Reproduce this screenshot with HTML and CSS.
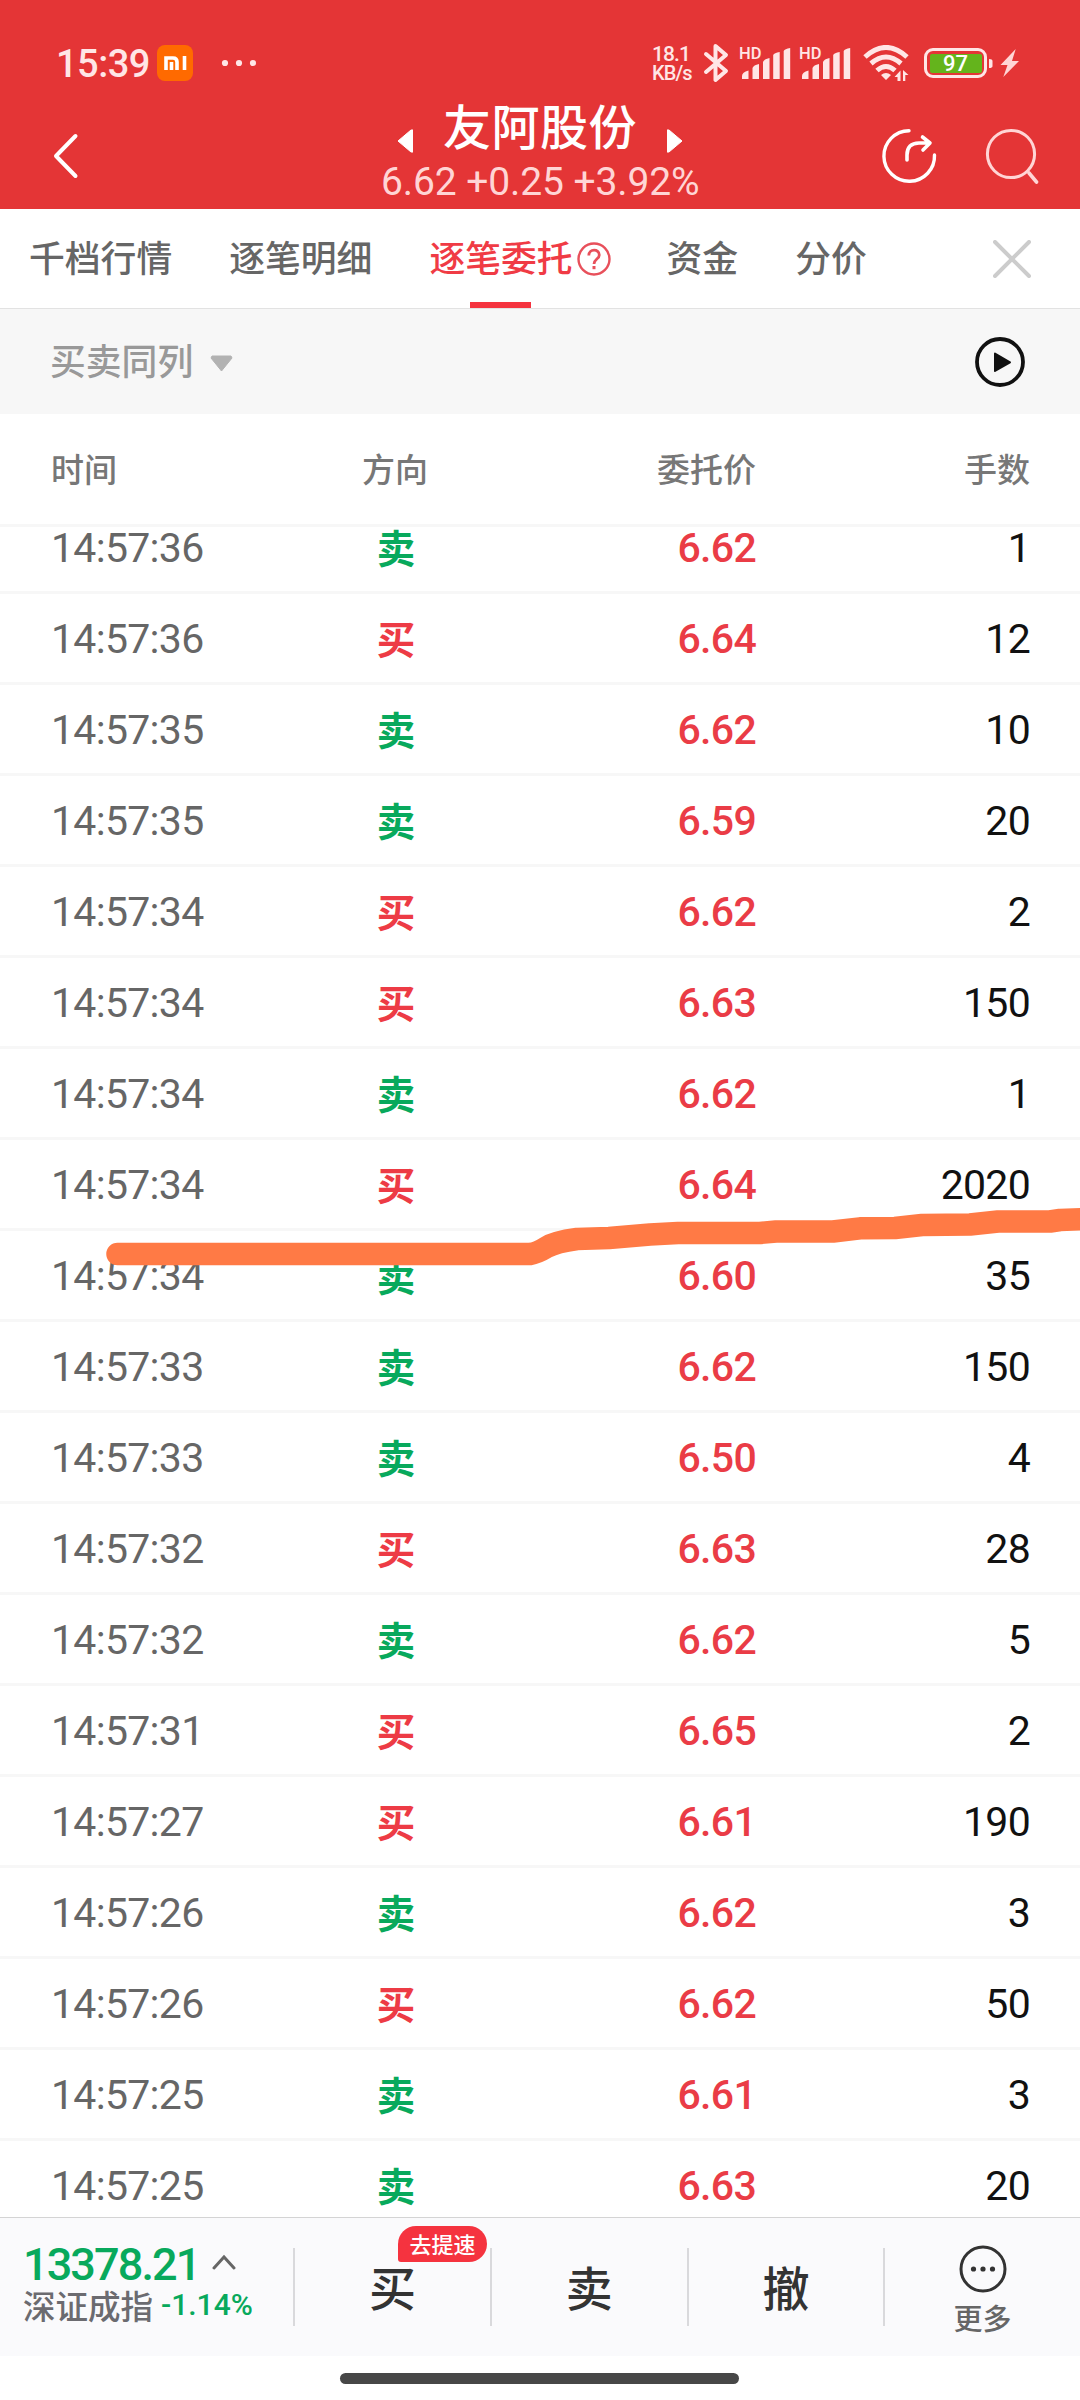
FILE: index.html
```html
<!DOCTYPE html>
<html lang="zh-CN">
<head>
    <meta charset="UTF-8">
    <meta name="viewport" content="width=device-width, initial-scale=1.0">
    <title>友阿股份</title>
    <link rel="stylesheet" href="styles.css">
</head>
<body>

    <!-- 顶部 -->
    <header class="header">
        <div class="status">
            <span class="clock">15:39</span>
            <svg class="mi" width="36" height="36" viewBox="0 0 36 36">
                <rect width="36" height="36" rx="8" fill="#ff6a00"/>
                <path d="M9 25V13H16q4 0 4 4v8M14.500 17v8M27.500 11v14" fill="none" stroke="#fff" stroke-width="3.600"/>
            </svg>
            <svg class="dots" width="36" height="8" viewBox="0 0 36 8" fill="#ffe6e6">
                <circle cx="4" cy="4" r="3.100"/><circle cx="18" cy="4" r="3.100"/><circle cx="32" cy="4" r="3.100"/>
            </svg>
            <div class="speed"><span>18.1</span><span>KB/s</span></div>
            <svg class="bluetooth" width="26" height="40" viewBox="0 0 26 40">
                <path d="M3 11l20 17-10.500 9V3L23 12 3 29" fill="none" stroke="#ffe6e6" stroke-width="4" stroke-linecap="round" stroke-linejoin="round"/>
            </svg>
            <div class="signal">
                <span>HD</span>
                <svg width="50" height="32" viewBox="0 0 50 32" fill="#ffe6e6">
                    <path d="M0 32v-3q0-4 6.500-5.500V32zM10.500 32V21q1-3 6.500-4V32zM21 32V15q1-3 6.500-4V32zM31.200 32V8q1-2 6.500-3V32zM41.700 32V4q1-2 6.500-3V32z"/>
                </svg>
            </div>
            <div class="signal">
                <span>HD</span>
                <svg width="50" height="32" viewBox="0 0 50 32" fill="#ffe6e6">
                    <path d="M0 32v-3q0-4 6.500-5.500V32zM10.500 32V21q1-3 6.500-4V32zM21 32V15q1-3 6.500-4V32zM31.200 32V8q1-2 6.500-3V32zM41.700 32V4q1-2 6.500-3V32z"/>
                </svg>
            </div>
            <svg class="wifi" width="46" height="36" viewBox="0 0 46 36">
                <path d="M2 12q21-19 42 0M8 18.500q15-13 30 0M14 25.500q9-8 18 0" fill="none" stroke="#ffe6e6" stroke-width="5"/>
                <path d="M18 30q5-4 10 0l-5 5zM37.500 36V25.500l-6 6.500h3v4zM40 25v11h2.300v-6h3.200z" fill="#ffe6e6"/>
            </svg>
            <div class="battery"><span>97</span></div>
            <svg class="bolt" width="34" height="30" viewBox="0 0 34 30">
                <path d="M2 11q3.500 0 3.500 2v5q0 2-3.500 2z" fill="#ffe6e6"/>
                <path d="M28.700 1L13.500 17h7L16.300 29 32 13h-7z" fill="#ffd5d5"/>
            </svg>
        </div>
        <div class="title-bar">
            <svg class="back" width="26" height="46" viewBox="0 0 26 46">
                <path d="M22.500 3L3 23l19.500 20" fill="none" stroke="#fff" stroke-width="4" stroke-linecap="round" stroke-linejoin="round"/>
            </svg>
            <div class="stock">
                <div class="name">
                    <svg width="16" height="24" viewBox="0 0 16 24"><path d="M1 12L14 1h2v22h-2z" fill="#fff" stroke="#fff" stroke-linejoin="round"/></svg>
                    <h1>友阿股份</h1>
                    <svg width="16" height="24" viewBox="0 0 16 24"><path d="M15 12L2 1H0v22h2z" fill="#fff" stroke="#fff" stroke-linejoin="round"/></svg>
                </div>
                <div class="quote">6.62 +0.25 +3.92%</div>
            </div>
            <svg class="share" width="56" height="56" viewBox="0 0 56 56">
                <path d="M28 2.700A25.300 25.300 0 1 0 53.500 27" fill="none" stroke="#fff" stroke-width="3.400" stroke-linecap="round"/>
                <path d="M26 32v-5q0-12 12-12H48M41.500 9l7.500 6-7 7" fill="none" stroke="#fff" stroke-width="3.600" stroke-linecap="round" stroke-linejoin="round"/>
            </svg>
            <svg class="search" width="54" height="56" viewBox="0 0 54 56">
                <circle cx="26" cy="26" r="23.600" fill="none" stroke="#ffd5d5" stroke-width="3"/>
                <path d="M44 45l7.500 9" stroke="#ffd5d5" stroke-width="3.600" stroke-linecap="round"/>
            </svg>
        </div>
    </header>

    <!-- 标签栏 -->
    <nav class="tabs">
        <span class="tab">千档行情</span>
        <span class="tab">逐笔明细</span>
        <span class="tab active">逐笔委托<svg width="34" height="34" viewBox="0 0 34 34" fill="none" stroke="#e8505b" stroke-width="2.400">
            <circle cx="17" cy="17" r="15.500"/>
            <path d="M11.800 13.500c0-7 10.500-7 10.500-.5 0 4-5.300 4.200-5.300 9" stroke-width="2.800"/>
            <path d="M17 24v3.200" stroke-width="3"/>
        </svg></span>
        <span class="tab">资金</span>
        <span class="tab">分价</span>
        <svg class="close" width="38" height="38" viewBox="0 0 38 38">
            <path d="M2 2l34 34M36 2L2 36" stroke="#ccc" stroke-width="4" stroke-linecap="round"/>
        </svg>
    </nav>

    <div class="filter">
        <span>买卖同列</span>
        <svg class="arrow" width="23" height="17" viewBox="0 0 23 17"><path d="M2 1h19l1 2-10.500 13L1 3z" fill="#b2b2b2" stroke="#b2b2b2" stroke-linejoin="round"/></svg>
        <svg class="play" width="50" height="52" viewBox="0 0 50 52">
            <circle cx="25" cy="26" r="23" fill="none" stroke="#111" stroke-width="3.800"/>
            <path d="M20 17.500L35 26.300 20 35z" fill="#111" stroke="#111" stroke-width="2" stroke-linejoin="round"/>
        </svg>
    </div>

    <!-- 委托列表 -->
    <div class="row thead"><span>时间</span><span>方向</span><span>委托价</span><span>手数</span></div>
    <main class="list">
        <div class="rows">
            <div class="row"><span>14:57:36</span><b class="sell">卖</b><em>6.62</em><i>1</i></div>
            <div class="row"><span>14:57:36</span><b class="buy">买</b><em>6.64</em><i>12</i></div>
            <div class="row"><span>14:57:35</span><b class="sell">卖</b><em>6.62</em><i>10</i></div>
            <div class="row"><span>14:57:35</span><b class="sell">卖</b><em>6.59</em><i>20</i></div>
            <div class="row"><span>14:57:34</span><b class="buy">买</b><em>6.62</em><i>2</i></div>
            <div class="row"><span>14:57:34</span><b class="buy">买</b><em>6.63</em><i>150</i></div>
            <div class="row"><span>14:57:34</span><b class="sell">卖</b><em>6.62</em><i>1</i></div>
            <div class="row"><span>14:57:34</span><b class="buy">买</b><em>6.64</em><i>2020</i></div>
            <div class="row"><span>14:57:34</span><b class="sell">卖</b><em>6.60</em><i>35</i></div>
            <div class="row"><span>14:57:33</span><b class="sell">卖</b><em>6.62</em><i>150</i></div>
            <div class="row"><span>14:57:33</span><b class="sell">卖</b><em>6.50</em><i>4</i></div>
            <div class="row"><span>14:57:32</span><b class="buy">买</b><em>6.63</em><i>28</i></div>
            <div class="row"><span>14:57:32</span><b class="sell">卖</b><em>6.62</em><i>5</i></div>
            <div class="row"><span>14:57:31</span><b class="buy">买</b><em>6.65</em><i>2</i></div>
            <div class="row"><span>14:57:27</span><b class="buy">买</b><em>6.61</em><i>190</i></div>
            <div class="row"><span>14:57:26</span><b class="sell">卖</b><em>6.62</em><i>3</i></div>
            <div class="row"><span>14:57:26</span><b class="buy">买</b><em>6.62</em><i>50</i></div>
            <div class="row"><span>14:57:25</span><b class="sell">卖</b><em>6.61</em><i>3</i></div>
            <div class="row"><span>14:57:25</span><b class="sell">卖</b><em>6.63</em><i>20</i></div>
        </div>
        <!-- 手绘标记线 -->
        <svg class="marker" width="1080" height="70" viewBox="0 1205 1080 70">
            <path d="M117.500 1254H530Q537 1253 546 1247.500T577 1239L609 1238 650 1234.500 678 1233H760L776 1231.500H833L860 1228.300 895 1228 922 1225 970 1224.500 998 1221.500H1050L1060 1220 1095 1218.500" fill="none" stroke="#ff7a45" stroke-width="22.500" stroke-linecap="round" stroke-linejoin="round"/>
        </svg>
    </main>

    <!-- 底部交易栏 -->
    <footer class="footer">
        <div class="index">
            <div class="value">13378.21<svg width="24" height="16" viewBox="0 0 24 16"><path d="M2 14L12 3l10 11" fill="none" stroke="#666" stroke-width="3" stroke-linecap="round"/></svg></div>
            <div class="label">深证成指<span>-1.14%</span></div>
        </div>
        <div class="action">买<span class="badge">去提速</span></div>
        <div class="action">卖</div>
        <div class="action">撤</div>
        <div class="action more">
            <svg width="48" height="48" viewBox="0 0 48 48">
                <circle cx="24" cy="24" r="22" fill="none" stroke="#333" stroke-width="3"/>
                <g fill="#333"><circle cx="14.500" cy="24" r="2.600"/><circle cx="24" cy="24" r="2.600"/><circle cx="33.500" cy="24" r="2.600"/></g>
            </svg>
            更多
        </div>
    </footer>
    <div class="home"><div class="home-bar"></div></div>

</body>
</html>
```
FILE: styles.css
```css
* {
    box-sizing: border-box;
}
body {
    margin: 0;
    width: 1080px;
    height: 2400px;
    overflow: hidden;
    background: #fff;
    font-family: "Noto Sans CJK SC", sans-serif;
    color: #666;
}
svg {
    display: block;
    flex: none;
}

/* 数字字体 */
.status,
.quote,
.row span,
.row em,
.row i,
.value,
.label span {
    font-family: Roboto, "Noto Sans CJK SC", sans-serif;
}

/* 顶部 */
.header {
    height: 209px;
    background: #e43536;
    color: #ffe6e6;
}
.status {
    display: flex;
    align-items: center;
    height: 100px;
    padding: 26px 0 0 56px;
    font-weight: 500;
}
.clock {
    width: 101px;
    padding-top: 2px;
    font-size: 38px;
    line-height: 40px;
    letter-spacing: -0.5px;
}
.dots {
    margin-left: 28px;
}
.speed {
    display: flex;
    flex-direction: column;
    width: 51px;
    margin-left: 395px;
    padding-top: 2px;
    font-size: 20px;
    line-height: 20px;
    letter-spacing: -0.9px;
}
.speed span:first-child {
    font-size: 21px;
    line-height: 18px;
}
.bluetooth {
    margin-right: 12px;
}
.signal {
    position: relative;
    width: 50px;
    height: 32px;
    margin-right: 10px;
}
.signal svg {
    margin-left: 1px;
}
.signal span {
    position: absolute;
    left: -2px;
    top: -2px;
    font-size: 16.5px;
    line-height: 17px;
}
.wifi {
    margin-left: 2px;
}
.battery {
    width: 63px;
    height: 30px;
    margin-left: 15px;
    padding: 2.5px;
    border: 3.5px solid #ffe6e6;
    border-radius: 9px;
    display: flex;
}
.battery span {
    flex: 1;
    background: #64b41c;
    border-radius: 2px;
    color: #fff;
    font-size: 22px;
    line-height: 19px;
    text-align: center;
}
.title-bar {
    display: flex;
    height: 109px;
    padding-left: 53px;
}
.back {
    margin-top: 33px;
}
.stock {
    margin-left: 302px;
    width: 318px;
}
.name {
    display: flex;
    justify-content: space-between;
    padding: 0 16px;
    height: 60px;
}
.name svg {
    margin-top: 29px;
}
.name h1 {
    margin: 0;
    font-size: 48px;
    font-weight: 500;
    letter-spacing: 0.5px;
    line-height: 49px;
    color: #fff;
}
.quote {
    font-size: 39px;
    line-height: 44px;
    letter-spacing: -0.1px;
    color: #ffd5d5;
    text-align: center;
    white-space: nowrap;
}
.share {
    margin: 28px 0 0 182px;
}
.search {
    margin: 28px 0 0 48px;
}

/* 标签栏 */
.tabs {
    display: flex;
    height: 100px;
    padding-left: 29px;
    border-bottom: 1px solid #e2e2e2;
    font-size: 35.8px;
    font-weight: 500;
    line-height: 94px;
}
.tab {
    margin-right: 57px;
}
.tab.active {
    position: relative;
    display: flex;
    align-items: flex-start;
    gap: 4px;
    margin-right: 56px;
    color: #f03b45;
}
.tab.active svg {
    margin-top: 33px;
}
.tab.active::after {
    content: "";
    position: absolute;
    left: 41px;
    bottom: 0;
    width: 61px;
    height: 6px;
    background: #f5333f;
}
.close {
    margin: 31px 49px 0 auto;
}

.filter {
    display: flex;
    align-items: center;
    height: 105px;
    padding: 0 55px 0 50px;
    background: #f7f7f7;
    color: #999;
    font-size: 35.8px;
    font-weight: 500;
}
.filter span {
    line-height: 40px;
    padding-bottom: 5px;
}
.arrow {
    margin: 3px 0 0 17px;
}
.play {
    margin-left: auto;
}

/* 委托列表 */
.row {
    display: grid;
    grid-template-columns: 259px 170px 276px 1fr;
    align-items: center;
    height: 91px;
    padding: 0 50px 0 51px;
    border-bottom: 3px solid #f7f7f7;
    font-size: 41px;
    font-stretch: 90%;
    letter-spacing: -0.7px;
    line-height: 50px;
}
.row > * {
    padding-top: 1px;
}
.row > :nth-child(2) {
    text-align: center;
}
.row > :nth-child(n+3) {
    text-align: right;
}
.row.thead span {
    height: 52px;
    padding: 0;
    font-family: "Noto Sans CJK SC", sans-serif;
    font-size: 33px;
    font-weight: 500;
    letter-spacing: 0;
    color: #777;
}
.row.thead {
    height: 113px;
}
.list {
    position: relative;
    height: 1690px;
    overflow: hidden;
}
.rows {
    margin-top: -24px;
}
.row b {
    font-size: 38.5px;
    font-weight: 700;
    letter-spacing: 0;
    padding: 0 0 2px 2px;
}
.row em {
    color: #ea3c46;
    font-style: normal;
    font-weight: 500;
}
.row i {
    color: #111;
    font-style: normal;
}
.row .sell {
    color: #08a95c;
}
.row .buy {
    color: #ed3b45;
}
.marker {
    position: absolute;
    left: 0;
    top: 678px;
}

/* 底部交易栏 */
.footer {
    display: flex;
    height: 139px;
    padding-top: 30px;
    background: #fafafc;
    border-top: 1px solid #d4d4d4;
}
.index {
    width: 293px;
    padding-left: 23px;
    white-space: nowrap;
}
.value {
    display: flex;
    gap: 13px;
    color: #08a95c;
    font-size: 45px;
    font-weight: 500;
    letter-spacing: -1.9px;
    line-height: 34px;
}
.value svg {
    margin-top: 6px;
}
.label {
    display: flex;
    align-items: center;
    gap: 8px;
    margin-top: 2px;
    height: 40px;
    font-size: 32.5px;
    font-weight: 500;
    color: #6b6b70;
}
.label span {
    font-size: 30px;
    color: #08a95c;
}
.action {
    position: relative;
    flex: 1;
    height: 78px;
    border-left: 2px solid #d9d9dc;
    color: #333;
    font-size: 47px;
    font-weight: 500;
    line-height: 76px;
    text-align: center;
}
.badge {
    position: absolute;
    left: 103px;
    top: -22px;
    width: 89px;
    height: 36px;
    border-radius: 18px 18px 18px 3px;
    background: #f5333f;
    color: #fff;
    font-size: 22px;
    line-height: 34px;
}
.more {
    color: #666;
    font-size: 29px;
    line-height: 49px;
}
.more svg {
    margin: -3px auto 0;
}
.home {
    height: 44px;
    padding-top: 17px;
}
.home-bar {
    width: 399px;
    height: 11px;
    margin-left: 340px;
    border-radius: 6px;
    background: #474747;
}
```
